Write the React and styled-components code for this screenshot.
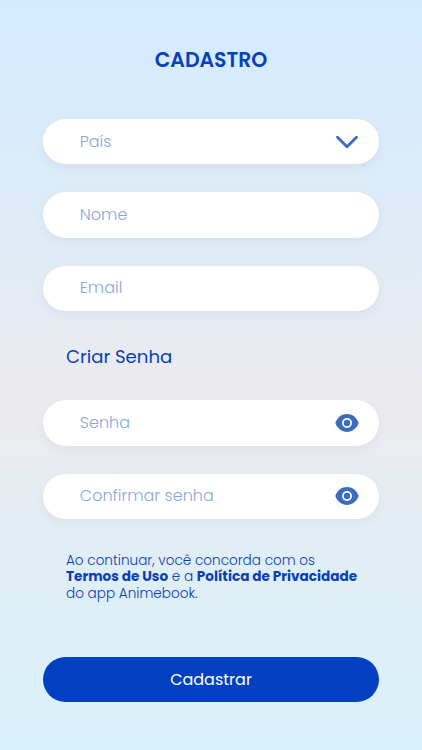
import React from "react";
import styled, { createGlobalStyle } from "styled-components";

const GlobalStyle = createGlobalStyle`
	:root {
		--blue: #0040c1;
		--blue-text: #0741b9;
		--blue-soft: #3c6dbd;
		--placeholder: #89a8da;
	}

	* {
		box-sizing: border-box;
	}

	body {
		margin: 0;
	}

	body, input, button {
		font-family: Poppins, "Open Sans", sans-serif;
	}
`;

const Page = styled.main`
	min-height: 750px;
	padding: 47.5px 43.3px 0;
	background: linear-gradient(
		180deg,
		#d4ebff 0%,
		#dbebf9 23%,
		#ebebef 52%,
		#ebebef 56%,
		#e0eef5 76%,
		#d9f1fb 100%
	);
`;

const Title = styled.h1`
	margin: 0 0 47.5px;
	color: var(--blue-text);
	font-size: 20.4px;
	font-weight: 600;
	line-height: 24px;
	text-align: center;
`;

const Fields = styled.div`
	display: grid;
	grid-template-columns: minmax(0, 1fr);
	gap: 28px;
`;

const Field = styled.label`
	display: flex;
	align-items: center;
	height: 45.3px;
	padding: 0 20px 0 36.5px;
	border-radius: 23px;
	background-color: #fff;
	box-shadow: 0 4px 10px rgba(60, 80, 120, 0.06);
`;

const Input = styled.input`
	flex: 1;
	min-width: 0;
	height: 24px;
	padding: 0;
	margin-top: -1px;
	border: 0;
	outline: 0;
	background: transparent;
	color: var(--blue-text);
	font-size: 16px;
	font-weight: 300;

	&::placeholder {
		color: var(--placeholder);
		opacity: 1;
	}
`;

const Subtitle = styled.h2`
	margin: 34px 22.7px 31.5px;
	color: var(--blue-text);
	font-size: 18.1px;
	font-weight: 400;
	line-height: 24px;
`;

const Terms = styled.p`
	margin: 34px 0 54.8px 22.7px;
	color: var(--blue-text);
	font-size: 13.6px;
	font-weight: 300;
	line-height: 16.3px;
	white-space: nowrap;

	strong {
		font-weight: 700;
	}
`;

const SubmitButton = styled.button`
	display: block;
	width: 100%;
	height: 45.3px;
	border: 0;
	border-radius: 23px;
	background-color: var(--blue);
	color: #fff;
	font-size: 16px;
	font-weight: 400;
`;

const Icon = styled.svg`
	flex: none;
	display: block;
`;

const ChevronIcon = () => (
	<Icon width="24" height="24" viewBox="0 0 24 24" fill="none">
		<path
			d="M2.500 7.300 12 16.700 21.500 7.300"
			stroke="var(--blue-soft)"
			strokeWidth="2.9"
			strokeLinecap="round"
			strokeLinejoin="round"
		/>
	</Icon>
);

const EyeIcon = () => (
	<Icon width="24" height="24" viewBox="0 0 24 24">
		<path
			d="M12 3.1C6.6 3.1 2.5 6.6.6 11.2a2 2 0 0 0 0 1.6C2.5 17.4 6.6 20.9 12 20.9s9.5-3.5 11.4-8.1a2 2 0 0 0 0-1.6C21.5 6.6 17.4 3.1 12 3.1Z"
			fill="var(--blue-soft)"
		/>
		<circle cx="12" cy="12" r="4.1" fill="none" stroke="#fff" strokeWidth="1.7" />
	</Icon>
);

const App = () => {
	return (
		<>
			<GlobalStyle />
			<Page>
				<Title>CADASTRO</Title>
				<Fields>
					<Field>
						<Input placeholder="País" readOnly />
						<ChevronIcon />
					</Field>
					<Field>
						<Input placeholder="Nome" />
					</Field>
					<Field>
						<Input type="email" placeholder="Email" />
					</Field>
				</Fields>
				<Subtitle>Criar Senha</Subtitle>
				<Fields>
					<Field>
						<Input type="password" placeholder="Senha" />
						<EyeIcon />
					</Field>
					<Field>
						<Input type="password" placeholder="Confirmar senha" />
						<EyeIcon />
					</Field>
				</Fields>
				<Terms>
					Ao continuar, você concorda com os
					<br />
					<strong>Termos de Uso</strong> e a <strong>Política de Privacidade</strong>
					<br />
					do app Animebook.
				</Terms>
				<SubmitButton>Cadastrar</SubmitButton>
			</Page>
		</>
	);
};

export default App;
